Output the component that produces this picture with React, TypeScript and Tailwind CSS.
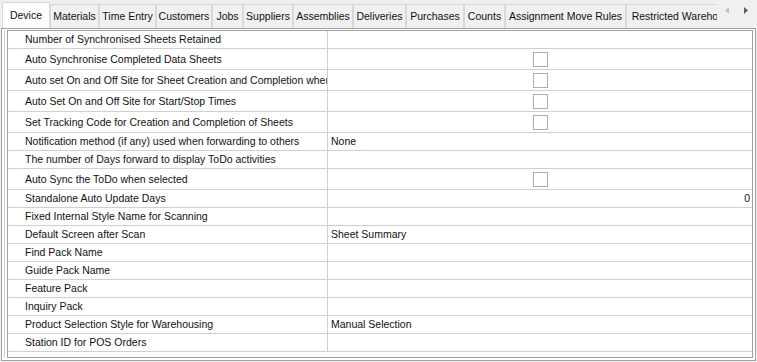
import React from "react";

const tabs: [string, number][] = [
  ["Device", 48],
  ["Materials", 49],
  ["Time Entry", 57],
  ["Customers", 56],
  ["Jobs", 31],
  ["Suppliers", 50],
  ["Assemblies", 60],
  ["Deliveries", 53],
  ["Purchases", 58],
  ["Counts", 41],
  ["Assignment Move Rules", 121],
  ["Restricted Warehouses", 120],
];

type Row = { label: string; value?: string; check?: boolean; num?: string };

const rows: Row[] = [
  { label: "Number of Synchronised Sheets Retained" },
  { label: "Auto Synchronise Completed Data Sheets", check: true },
  { label: "Auto set On and Off Site for Sheet Creation and Completion when Synchronising", check: true },
  { label: "Auto Set On and Off Site for Start/Stop Times", check: true },
  { label: "Set Tracking Code for Creation and Completion of Sheets", check: true },
  { label: "Notification method (if any) used when forwarding to others", value: "None" },
  { label: "The number of Days forward to display ToDo activities" },
  { label: "Auto Sync the ToDo when selected", check: true },
  { label: "Standalone Auto Update Days", num: "0" },
  { label: "Fixed Internal Style Name for Scanning" },
  { label: "Default Screen after Scan", value: "Sheet Summary" },
  { label: "Find Pack Name" },
  { label: "Guide Pack Name" },
  { label: "Feature Pack" },
  { label: "Inquiry Pack" },
  { label: "Product Selection Style for Warehousing", value: "Manual Selection" },
  { label: "Station ID for POS Orders" },
];

const TabStrip = () => (
  <div className="flex h-[28px] items-end">
    <div className="flex w-[717px] items-end overflow-hidden pl-[2px]">
      {tabs.map(([name, w], i) =>
        i === 0 ? (
          <div
            key={name}
            style={{ width: w }}
            className="relative z-10 -mb-[2px] flex h-[28px] shrink-0 items-start justify-center border border-b-0 border-[#d9d9d9] bg-white pt-[6px]"
          >
            {name}
          </div>
        ) : (
          <div
            key={name}
            style={{ width: w }}
            className="flex h-[24px] shrink-0 items-start justify-center whitespace-nowrap border border-b-0 border-[#d9d9d9] bg-[#f0f0f0] pt-[5px]"
          >
            {name}
          </div>
        ),
      )}
    </div>
    {/* scroll arrows */}
    <div className="flex h-[28px] flex-1 items-start gap-[15px] pl-[8px] pt-[7px]">
      <svg width="4" height="7" viewBox="0 0 4 7">
        <path d="M4 0 L0 3.5 L4 7 Z" fill="#c0c0c0" />
      </svg>
      <svg width="4" height="7" viewBox="0 0 4 7">
        <path d="M0 0 L4 3.5 L0 7 Z" fill="#606060" />
      </svg>
    </div>
  </div>
);

const Checkbox = () => (
  <div className="h-[15px] w-[15px] border border-[#adadad] bg-white" />
);

const Grid = () => (
  <div className="flex h-[328px] flex-col border border-[#a0a0a0] bg-white">
    {rows.map((r) => (
      <div
        key={r.label}
        className={`flex shrink-0 border-b border-[#d0d0d0] ${r.check ? "h-[21px]" : "h-[18px]"}`}
      >
        <div className="flex w-[320px] shrink-0 items-center overflow-hidden whitespace-nowrap border-r border-[#d0d0d0] pl-[17px]">
          {r.label}
        </div>
        <div className="flex flex-1 items-center overflow-hidden whitespace-nowrap pl-[3px] pr-[2px]">
          {r.check && (
            <div className="flex flex-1 justify-center pr-[1px]">
              <Checkbox />
            </div>
          )}
          {r.value}
          {r.num && <div className="flex-1 text-right">{r.num}</div>}
        </div>
      </div>
    ))}
  </div>
);

export default function App() {
  return (
    <div
      className="flex h-[362px] w-[757px] flex-col overflow-hidden bg-[#f0f0f0] text-[10.5px] leading-[13px] text-[#111]"
      style={{ fontFamily: '"Liberation Sans", Arial, sans-serif' }}
    >
      <TabStrip />
      <div className="ml-[1px] flex h-[333px] w-[755px] flex-col border border-[#a0a0a0] bg-white pl-[2px] pr-[2px] pt-[1px] pb-[2px]">
        <div className="flex flex-1 flex-col border-l border-[#d0d0d0] pl-[2px]">
          <Grid />
        </div>
      </div>
    </div>
  );
}
